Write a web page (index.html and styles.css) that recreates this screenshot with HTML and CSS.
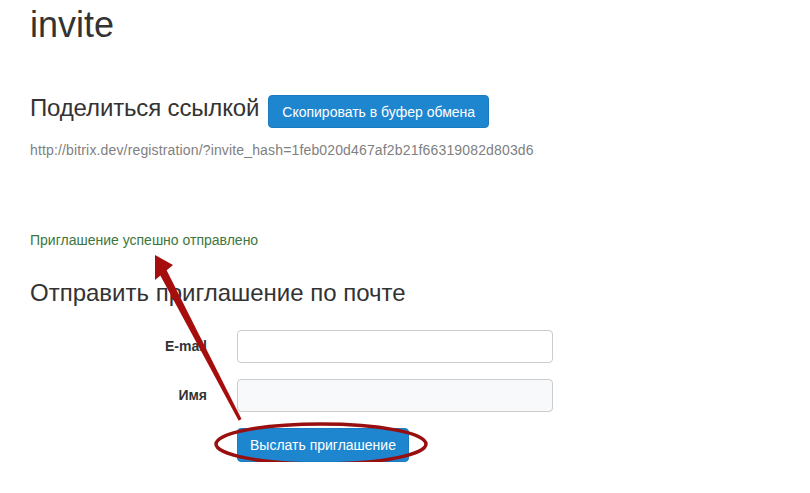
FILE: index.html
```html
<!DOCTYPE html>
<html lang="ru">
<head>
    <meta charset="UTF-8">
    <title>invite</title>
    <link rel="stylesheet" href="styles.css">
</head>
<body>
    <div class="page">
        <h1 class="title">invite</h1>

        <div class="share-row">
            <h3 class="section-title">Поделиться ссылкой</h3>
            <button class="btn">Скопировать в буфер обмена</button>
        </div>
        <p class="invite-link">http://bitrix.dev/registration/?invite_hash=1feb020d467af2b21f66319082d803d6</p>

        <p class="success">Приглашение успешно отправлено</p>

        <h3 class="section-title mail-title">Отправить приглашение по почте</h3>

        <form class="invite-form">
            <label class="form-label" for="email">E-mail</label>
            <input class="form-input" type="text" id="email">
            <label class="form-label" for="name">Имя</label>
            <input class="form-input filled" type="text" id="name">
            <span></span>
            <div><button type="button" class="btn">Выслать приглашение</button></div>
        </form>
    </div>

    <!-- пометки поверх скриншота -->
    <svg class="annotation" viewBox="0 0 810 493" xmlns="http://www.w3.org/2000/svg">
        <polygon points="166.5,270 159.5,274 238.7,420.7 241.5,419" fill="#a60d0d"/>
        <polygon points="155,255 155,280 173,265" fill="#a60d0d"/>
        <ellipse cx="321" cy="444" rx="105" ry="20" fill="none" stroke="#990f0f" stroke-width="3.5"/>
    </svg>
</body>
</html>
```

FILE: styles.css
```css
* {
    box-sizing: border-box;
}

body {
    margin: 0;
    background: #ffffff;
    color: #333333;
    font-family: "Liberation Sans", Arial, sans-serif;
    font-size: 14px;
    line-height: 20px;
    position: relative;
}

.page {
    padding: 5px 30px 0;
}

.title {
    margin: 0;
    font-size: 36px;
    font-weight: 400;
    line-height: 1.1;
}

.share-row {
    display: flex;
    align-items: flex-start;
    gap: 9px;
    margin-top: 50px;
}

.section-title {
    margin: 0;
    font-size: 24px;
    font-weight: 400;
    line-height: 1.1;
}

.share-row .section-title {
    letter-spacing: -0.15px;
}

.btn {
    background: #1e86cf;
    color: #ffffff;
    border: 1px solid #1b7cc2;
    border-radius: 4px;
    padding: 6px 13px;
    height: 33px;
    font-family: inherit;
    font-size: 14px;
    line-height: 20px;
    cursor: pointer;
}

.invite-link {
    margin: 12px 0 0;
    color: #808080;
    letter-spacing: 0.15px;
}

.success {
    margin: 70px 0 0;
    color: #3c763d;
}

.mail-title {
    margin-top: 30px;
}

.invite-form {
    display: grid;
    grid-template-columns: 177px 316px;
    column-gap: 30px;
    row-gap: 16px;
    align-items: center;
    margin-top: 24px;
}

.form-label {
    text-align: right;
    font-weight: 700;
}

.form-input {
    height: 33px;
    border: 1px solid #cccccc;
    border-radius: 4px;
    padding: 6px 12px;
    font-size: 14px;
    background: #ffffff;
}

.form-input.filled {
    background: #f7f9fb;
}

.invite-form .btn {
    height: 34px;
    padding: 6px 12px;
}

.annotation {
    position: absolute;
    top: 0;
    left: 0;
    width: 810px;
    height: 493px;
    pointer-events: none;
}
```
